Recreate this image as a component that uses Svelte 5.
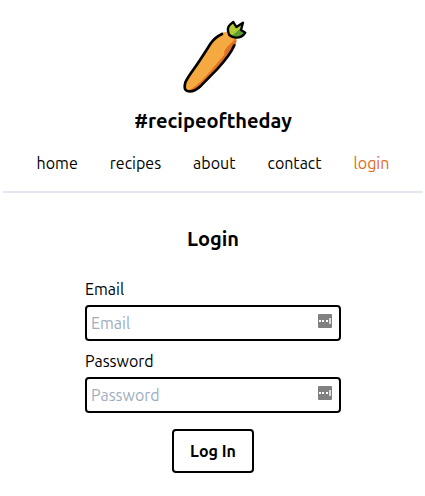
<script>
  const links = ['home', 'recipes', 'about', 'contact', 'login'];
  const fields = [
    { id: 'email', label: 'Email', type: 'email' },
    { id: 'password', label: 'Password', type: 'password' }
  ];
  let current = $state('login');
</script>

<div class="page">
  <header>
    <svg class="logo" viewBox="-6 0 252 270" aria-hidden="true">
      <path fill="#f4aa41" d="M147 68 Q166 62 180 76 Q195 90 184 110 C174 130 158 150 132 177 L82 227 Q62 246 43 242 Q30 236 37 211 C43 196 56 182 70 160 L105 108 Q124 78 147 68Z" />
      <path fill="#e27022" d="M189 84 Q194 96 184 111 C174 130 154 153 132 177 L82 227 Q64 243 50 241 Q77 224 104 193 L154 134 Q152 118 168 106Z" />
      <path fill="#b1cc33" d="M169 75 Q159 54 172 44 L181 36 L190 52 L210 39 L204 61 L218 67 Q207 84 188 83 Q177 82 169 75Z" />
      <path fill="#5c9e31" d="M172 77 Q184 74 194 62 L207 50 L204 61 L218 67 Q207 84 188 83 Q177 82 172 77Z" />
      <g fill="none" stroke="#000" stroke-width="8" stroke-linecap="round" stroke-linejoin="round">
        <path d="M147 72 Q125 83 114 99 C98 124 80 153 62 178 Q44 203 37 217 Q31 239 43 243 Q62 248 84 227 L132 178 C158 150 174 130 184 106" />
        <path stroke-width="7" d="M169 75 Q159 54 172 43 L181 36 L190 51 L210 38 L204 60 L217 68 Q207 84 188 83 Q177 82 169 75Z" />
      </g>
    </svg>
    <h1>#recipeoftheday</h1>
    <nav>
      {#each links as link}
        <a href={'#' + link} class:active={current === link} onclick={() => (current = link)}>{link}</a>
      {/each}
    </nav>
  </header>

  <main>
    <h2>Login</h2>
    <form onsubmit={(e) => e.preventDefault()}>
      {#each fields as field}
        <div class="field">
          <label for={field.id}>{field.label}</label>
          <div class="box">
            <input id={field.id} type={field.type} placeholder={field.label} />
            <svg class="fill" viewBox="0 0 14 14" aria-hidden="true">
              <rect width="14" height="14" rx="1" fill="#808080" />
              <path fill="#fff" d="M1 6h2v2H1zM4 6h2v2H4zM8 6h2v2H8z" />
              <path fill="#ddd" d="M11 4h2v6h-2z" />
            </svg>
          </div>
        </div>
      {/each}
      <button type="submit">Log In</button>
    </form>
  </main>
</div>

<style>
  :global(body) {
    background: #fff;
  }

  .page {
    padding: 10px 2px 16px 3px;
    color: #000;
    font: 16px/24px Ubuntu, 'Noto Sans', sans-serif;
  }

  header {
    display: flex;
    flex-direction: column;
    align-items: center;
    padding-bottom: 16px;
    border-bottom: 2px solid #e2e8f0;
  }

  .logo {
    width: 84px;
    height: 90px;
  }

  h1,
  h2 {
    margin: 0;
    font-size: 20px;
    line-height: 30px;
    text-align: center;
  }

  h1 {
    margin: 6px 0 15px;
  }

  nav {
    display: flex;
    gap: 32px;
  }

  a {
    color: inherit;
    text-decoration: none;
  }

  a.active {
    color: #dd6b20;
  }

  main {
    padding-top: 31px;
  }

  form {
    display: flex;
    flex-direction: column;
    align-items: center;
    gap: 8px;
    margin-top: 23px;
  }

  .field {
    display: flex;
    flex-direction: column;
    gap: 4px;
    width: 256px;
    max-width: 100%;
  }

  .box {
    position: relative;
  }

  input {
    display: block;
    box-sizing: border-box;
    width: 100%;
    height: 36px;
    padding: 4px;
    border: 2px solid #000;
    border-radius: 4px;
    background: #fff;
    font: inherit;
  }

  input::placeholder {
    color: #a0aec0;
    opacity: 1;
  }

  .fill {
    position: absolute;
    top: 9px;
    right: 9px;
    width: 14px;
    height: 14px;
  }

  button {
    margin-top: 8px;
    padding: 8px 16px;
    border: 2px solid #000;
    border-radius: 4px;
    background: #fff;
    color: inherit;
    font: inherit;
    font-weight: 700;
    cursor: pointer;
  }
</style>
